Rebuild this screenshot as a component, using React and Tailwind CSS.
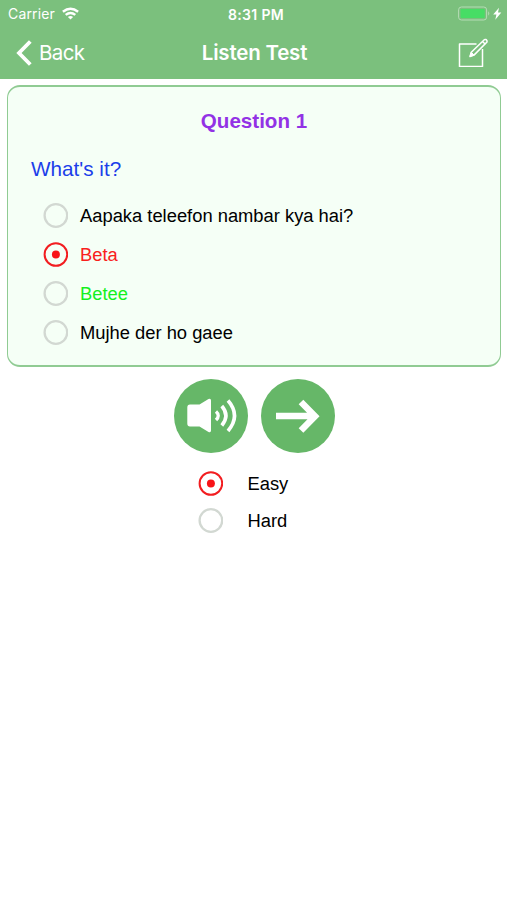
const options = [
  { label: "Aapaka teleefon nambar kya hai?", color: "text-black" },
  { label: "Beta", color: "text-[#f9201c]", checked: true },
  { label: "Betee", color: "text-[#14f01e]" },
  { label: "Mujhe der ho gaee", color: "text-black" },
];

const levels = [{ label: "Easy", checked: true }, { label: "Hard" }];

function Radio({ checked }) {
  return (
    <svg className="size-[25px] shrink-0" viewBox="0 0 25 25" fill="none">
      <circle cx="12.9" cy="12.5" r="11.3" stroke={checked ? "#f21d20" : "#d2d8d2"} strokeWidth={checked ? 2 : 2.3} />
      {checked && <circle cx="12.9" cy="12.5" r="4" fill="#f81418" />}
    </svg>
  );
}

function StatusBar() {
  return (
    <div className="grid h-7 grid-cols-3 items-center pl-[8px] pr-[5px] leading-none">
      <div className="flex items-center gap-[7px]">
        <span className="text-[14px] tracking-[0.15px]">Carrier</span>
        <svg className="h-[13px] w-[17px] -translate-y-px" viewBox="0 0 17 13" fill="none" stroke="white" strokeWidth="2.4">
          <path d="M.9 4.800Q8.500-1.400 16.100 4.800M3.700 7.900Q8.500 3.900 13.300 7.900" />
          <path d="M5.900 9.900Q8.500 7.900 11.100 9.900L8.500 12.600Z" fill="white" stroke="none" />
        </svg>
      </div>
      <span className="translate-x-[1px] translate-y-[0.5px] text-center text-[14px] font-semibold tracking-[0.35px]">8:31 PM</span>
      <svg className="h-[15px] w-[44px] -translate-y-px justify-self-end" viewBox="0 0 44 15" fill="none">
        <rect x=".6" y="1" width="28" height="13" rx="2.800" stroke="#b5dcb6" />
        <rect x="2.500" y="2.900" width="24.200" height="9.200" rx="1" fill="#47dd65" />
        <path d="M30.200 5.300Q32.400 7.500 30.200 9.700Z" fill="#b5dcb6" />
        <path d="M41 1.800L35.200 8.600H38.400L37.300 13.800L43.300 6.600H40Z" fill="white" />
      </svg>
    </div>
  );
}

function NavBar() {
  return (
    <div className="grid h-[51px] grid-cols-3 items-center pl-[16px] pr-[19px]">
      <div className="flex items-center gap-[6px]">
        <svg className="h-[27px] w-[17px] -translate-y-[0.5px]" viewBox="0 0 17 27" fill="none">
          <path d="M14.300 2L3 13.500L14.300 25" stroke="white" strokeWidth="3.800" />
        </svg>
        <span className="-translate-y-[0.5px] text-[20.5px] tracking-[-0.6px]">Back</span>
      </div>
      <h1 className="translate-x-[2.5px] -translate-y-[0.5px] text-center text-[20.500px] font-semibold tracking-[-0.2px] whitespace-nowrap">Listen Test</h1>
      <svg className="h-[30px] w-[30px] -translate-y-[2px] justify-self-end" viewBox="0 0 30 30" fill="none" stroke="white" strokeLinejoin="round">
        <path d="M18.500 7H1.500V29.500H24.500V12" strokeWidth="1.500" />
        <path d="M12 19.500L13.300 15.200L26.300 2.700Q28 1.800 29 3.800L29 5L16 18.100Z" strokeWidth="1.500" />
        <path d="M24.500 4.500L27.300 7.200" strokeWidth="1.500" />
        <path d="M12 19.500L13.300 15.200L16 18.100Z" fill="white" />
      </svg>
    </div>
  );
}

export default function App() {
  return (
    <div className="h-[900px] w-[507px] overflow-hidden bg-white font-['Liberation_Sans',Arial,sans-serif] leading-none">
      <header className="h-[79px] bg-[#7bc07d] font-[Inter,sans-serif] text-white">
        <StatusBar />
        <NavBar />
      </header>

      <main className="px-[7px] pt-[6px]">
        <section className="h-[282px] w-[494px] rounded-[13px] border-[1.500px] border-y-2 border-[#90cb93] bg-[#f5fff6]">
          <h2 className="mt-[22px] text-center text-[20.600px] leading-6 font-bold text-[#9232e5]">Question 1</h2>
          <p className="mt-[24px] ml-[23px] text-[20.700px] leading-6 text-[#1b3eea]">What's it?</p>
          <ul className="mt-[15px] ml-[35px]">
            {options.map((o) => (
              <li key={o.label} className="flex h-[39px] items-center gap-[12px]">
                <Radio checked={o.checked} />
                <span className={"translate-y-px text-[18.350px] whitespace-nowrap " + o.color}>{o.label}</span>
              </li>
            ))}
          </ul>
        </section>

        <div className="mt-[12px] flex gap-[13px] pl-[167px]">
          <button className="size-[74px] rounded-full bg-[#66b768]">
            <svg viewBox="0 0 74 74" fill="none" stroke="white">
              <path d="M16 25.500H25.500L34.500 20Q37 19 37 21.500V51.500Q37 54 34.500 53L25.500 47.500H16Q13.300 47.500 13.300 44.500V28.500Q13.300 25.500 16 25.500Z" fill="white" stroke="none" />
              <path d="M42 32.500Q46.500 36.500 42 41" strokeWidth="3.300" />
              <path d="M47.800 27Q56 36.500 47.800 46.500" strokeWidth="3.600" />
              <path d="M54 21.500Q67 36.500 54 52" strokeWidth="3.600" />
            </svg>
          </button>
          <button className="size-[74px] rounded-full bg-[#66b768]">
            <svg viewBox="0 0 74 74" fill="none" stroke="white" strokeWidth="6.500">
              <path d="M15 37H54M40 23L54 37.200L40 51.500" />
            </svg>
          </button>
        </div>

        <ul className="mt-[12px] ml-[191px]">
          {levels.map((l) => (
            <li key={l.label} className="flex h-[37px] items-center gap-[24px]">
              <Radio checked={l.checked} />
              <span className="translate-x-[0.5px] translate-y-px text-[18.350px] text-black">{l.label}</span>
            </li>
          ))}
        </ul>
      </main>
    </div>
  );
}
